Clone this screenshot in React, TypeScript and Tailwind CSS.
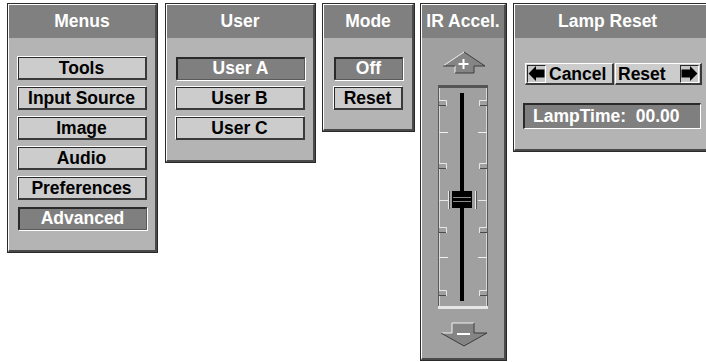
import React from "react";

const font = "font-['Liberation_Sans',Arial,sans-serif]";

function Panel({
  title,
  className,
  body = "bg-[#b4b4b4]",
  titleClass = "justify-center",
  children,
}: {
  title: string;
  className: string;
  body?: string;
  titleClass?: string;
  children?: React.ReactNode;
}) {
  return (
    <div className={`flex shrink-0 flex-col border border-[#2a2a2a] ${className}`}>
      <div className="flex flex-1 flex-col border-l border-t border-white border-b-2 border-r-2 border-b-[#4a4a4a] border-r-[#4a4a4a]">
        <div
          className={`flex h-[33px] items-center bg-[#808080] text-[17.5px] font-bold text-white ${titleClass}`}
        >
          {title}
        </div>
        <div className={`flex-1 ${body}`}>{children}</div>
      </div>
    </div>
  );
}

function Btn({ label, on, w = "w-[129px]" }: { label: string; on?: boolean; w?: string }) {
  if (on) {
    return (
      <div
        className={`flex h-[23px] ${w} items-center justify-center border-l-2 border-t-2 border-[#2a2a2a] border-b border-r border-b-[#5a5a5a] border-r-[#5a5a5a] bg-[#7f7f7f] text-[17.5px] font-bold leading-none text-white shadow-[1px_1px_0_#fff]`}
      >
        {label}
      </div>
    );
  }
  return (
    <div
      className={`flex h-[23px] ${w} items-center justify-center border-l border-t border-[#2a2a2a] border-b-2 border-r-2 border-b-[#3a3a3a] border-r-[#3a3a3a] bg-[#cccccc] pt-[2px] text-[17.5px] font-bold leading-none text-black shadow-[-1px_-1px_0_#fff]`}
    >
      {label}
    </div>
  );
}

function ArrowBox({ dir }: { dir: "left" | "right" }) {
  return (
    <div className="flex h-[18px] w-[19px] items-center justify-center border-l border-t border-[#2a2a2a] border-b border-r border-b-white border-r-white bg-[#c8c8c8]">
      <svg width="17" height="15" viewBox="0 0 17 15">
        <polygon
          points={
            dir === "left"
              ? "0.5,7.5 8,0 8,3.5 16.5,3.5 16.5,11.5 8,11.5 8,15"
              : "16.5,7.5 9,0 9,3.5 0.5,3.5 0.5,11.5 9,11.5 9,15"
          }
          fill="#000"
        />
      </svg>
    </div>
  );
}

function Slider() {
  const notches = [62, 125, 189, 252];
  const ticks = [94, 219];
  return (
    <svg width="83" height="320" viewBox="1 0 83 320">
      {/* up arrow */}
      <polygon points="43,14 64,28 53,28 53,35 34,35 34,28 22,28" fill="#858585" />
      <polyline points="22,28 43,14" stroke="#f2f2f2" strokeWidth="1" fill="none" />
      <polyline points="34,28 34,35" stroke="#f2f2f2" strokeWidth="1" fill="none" />
      <polyline points="43,14 64,28 53,28 53,35 34,35" stroke="#3c3c3c" strokeWidth="1" fill="none" />
      <polyline points="22,28 34,28" stroke="#3c3c3c" strokeWidth="1" fill="none" />
      <rect x="41.5" y="21" width="2" height="10" fill="#fff" />
      <rect x="37.5" y="25" width="10" height="2" fill="#fff" />

      {/* frame */}
      <rect x="17" y="47" width="50" height="3" fill="#555" />
      <rect x="17" y="268" width="50" height="3" fill="#e6e6e6" />
      <line x1="17.5" y1="50" x2="17.5" y2="268" stroke="#5a5a5a" />
      <line x1="18.5" y1="50" x2="18.5" y2="268" stroke="#d8d8d8" />
      <line x1="65.5" y1="50" x2="65.5" y2="268" stroke="#d8d8d8" />
      <line x1="66.5" y1="50" x2="66.5" y2="268" stroke="#5a5a5a" />
      {notches.map((y) => (
        <g key={y}>
          <rect x="18" y={y} width="7" height="6" fill="#a0a0a0" />
          <polyline points={`18,${y + 0.5} 25.5,${y + 0.5} 25.5,${y + 6}`} stroke="#e8e8e8" fill="none" />
          <line x1="18" y1={y + 5.5} x2="25" y2={y + 5.5} stroke="#4a4a4a" />
          <rect x="59" y={y} width="7" height="6" fill="#a0a0a0" />
          <polyline points={`66,${y + 0.5} 58.5,${y + 0.5} 58.5,${y + 6}`} stroke="#e8e8e8" fill="none" />
          <line x1="59" y1={y + 5.5} x2="66" y2={y + 5.5} stroke="#4a4a4a" />
        </g>
      ))}
      {ticks.map((y) => (
        <g key={y}>
          <line x1="18" y1={y + 0.5} x2="27" y2={y + 0.5} stroke="#f0f0f0" />
          <line x1="57" y1={y + 0.5} x2="66" y2={y + 0.5} stroke="#f0f0f0" />
        </g>
      ))}

      {/* track */}
      <rect x="39" y="55" width="4" height="208" fill="#000" />

      {/* thumb brackets */}
      <line x1="18" y1="162.5" x2="27" y2="162.5" stroke="#e8e8e8" />
      <line x1="27.5" y1="153" x2="27.5" y2="171" stroke="#e8e8e8" />
      <line x1="28.5" y1="153" x2="28.5" y2="171" stroke="#555" />
      <line x1="57" y1="162.5" x2="66" y2="162.5" stroke="#e8e8e8" />
      <line x1="54.5" y1="153" x2="54.5" y2="171" stroke="#e8e8e8" />
      <line x1="55.5" y1="153" x2="55.5" y2="171" stroke="#555" />

      {/* thumb */}
      <rect x="31" y="153" width="20" height="17" fill="#000" />
      <rect x="32" y="159" width="18" height="1" fill="#8a8a8a" />
      <rect x="32" y="163" width="18" height="1" fill="#8a8a8a" />

      {/* down arrow */}
      <polygon points="31,285 53,285 53,295 66,295 43,308 20,295 31,295" fill="#858585" />
      <polyline points="20,295 31,295 31,285 53,285" stroke="#f2f2f2" strokeWidth="1" fill="none" />
      <polyline points="53,285 53,295 66,295 43,308 20,295" stroke="#3c3c3c" strokeWidth="1" fill="none" />
      <rect x="36" y="295" width="13" height="2" fill="#fff" />
    </svg>
  );
}

export default function App() {
  return (
    <div className={`flex h-[362px] w-[706px] items-start overflow-hidden bg-white pl-[7px] pt-[3px] ${font}`}>
      <Panel title="Menus" className="h-[250px] w-[151px]">
        <div className="flex flex-col items-center gap-[7px] pt-[19px]">
          <Btn label="Tools" />
          <Btn label="Input Source" />
          <Btn label="Image" />
          <Btn label="Audio" />
          <Btn label="Preferences" />
          <Btn label="Advanced" on />
        </div>
      </Panel>

      <Panel title="User" className="ml-[7px] h-[160px] w-[151px]">
        <div className="flex flex-col items-center gap-[7px] pt-[19px]">
          <Btn label="User A" on />
          <Btn label="User B" />
          <Btn label="User C" />
        </div>
      </Panel>

      <Panel title="Mode" className="ml-[6px] h-[129px] w-[93px]">
        <div className="flex flex-col items-center gap-[7px] pt-[19px]">
          <Btn label="Off" on w="w-[69px]" />
          <Btn label="Reset" w="w-[69px]" />
        </div>
      </Panel>

      <Panel title="IR Accel." body="bg-[#a0a0a0]" className="ml-[5px] h-[358px] w-[87px]">
        <Slider />
      </Panel>

      <Panel
        title="Lamp Reset"
        titleClass="justify-start pl-[43px]"
        className="ml-[6px] h-[149px] w-[198px]"
      >
        <div className="flex flex-col pl-[8px] pt-[25px]">
          <div className="flex gap-px pl-[2px]">
            <div className="flex h-[22px] w-[89px] items-center gap-[3px] border-l border-t border-white border-b-2 border-r-2 border-b-[#3a3a3a] border-r-[#3a3a3a] bg-[#cccccc] pl-[1px] text-[17.5px] font-bold leading-none text-black">
              <ArrowBox dir="left" />
              <span className="pt-[2px]">Cancel</span>
            </div>
            <div className="flex h-[22px] w-[87px] items-center justify-between border-l border-t border-white border-b-2 border-r-2 border-b-[#3a3a3a] border-r-[#3a3a3a] bg-[#cccccc] pl-[2px] pr-[1px] text-[17.5px] font-bold leading-none text-black">
              <span className="pt-[2px]">Reset</span>
              <ArrowBox dir="right" />
            </div>
          </div>
          <div className="mt-[18px] flex h-[26px] w-[178px] items-center whitespace-pre border-l-2 border-t-2 border-[#2a2a2a] border-b border-r border-b-white border-r-white bg-[#7f7f7f] pl-[8px] pt-[1px] text-[17.5px] font-bold leading-none text-white">
            {"LampTime:  00.00"}
          </div>
        </div>
      </Panel>
    </div>
  );
}
